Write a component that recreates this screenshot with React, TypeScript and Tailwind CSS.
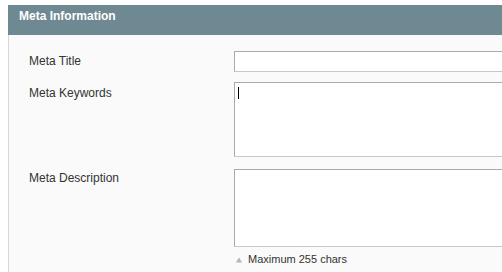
export default function App() {
  const label = "w-[205px] shrink-0 text-[12px] leading-[15px] text-[#333]"
  return (
    <div className="w-[502px] h-[272px] overflow-hidden bg-white pt-[5px] pl-[8px] font-['Liberation_Sans',Arial,sans-serif]">
      <div className="h-[30px] bg-[#6f8992] pl-[11px] pt-[4px] text-[12px] leading-[15px] font-bold text-white">
        Meta Information
      </div>
      <div className="h-[240px] bg-[#fafafa] border-l border-[#d6d6d6] pl-[20px] pt-[16px]">
        <div className="flex">
          <div className={`${label} pt-[3px]`}>Meta Title</div>
          <div className="w-[280px] h-[21px] shrink-0 bg-white border border-[#aaa] border-r-[#c8c8c8] border-b-[#c8c8c8]" />
        </div>
        <div className="flex mt-[10px]">
          <div className={`${label} pt-[4px]`}>Meta Keywords</div>
          <div className="relative w-[280px] h-[75px] shrink-0 bg-white border border-[#aaa] border-r-[#c8c8c8] border-b-[#c8c8c8]">
            <div className="absolute left-[3px] top-[4px] w-px h-[12px] bg-black" />
          </div>
        </div>
        <div className="flex mt-[12px]">
          <div className={`${label} pt-[2px]`}>Meta Description</div>
          <div>
            <div className="w-[280px] h-[78px] bg-white border border-[#aaa] border-r-[#c8c8c8] border-b-[#c8c8c8]" />
            <div className="flex items-center mt-[6px] text-[11px] leading-[13px] text-[#333]">
              <svg width="6" height="6" viewBox="0 0 6 6" className="ml-[2px] mr-[6px]">
                <polygon points="3,0.5 6,5.5 0,5.5" fill="#a9b9b5" />
              </svg>
              Maximum 255 chars
            </div>
          </div>
        </div>
      </div>
    </div>
  )
}
